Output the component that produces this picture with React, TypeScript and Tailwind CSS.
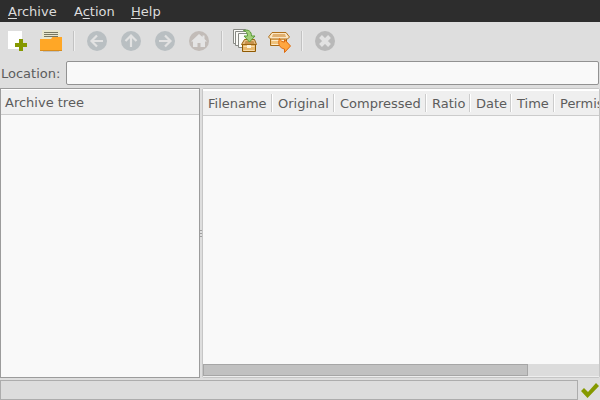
import type { ReactNode } from 'react'

const menus = [
  { before: '', key: 'A', after: 'rchive', width: 'w-[66px]' },
  { before: 'A', key: 'c', after: 'tion', width: 'w-[57px]' },
  { before: '', key: 'H', after: 'elp', width: 'w-[46px]' },
]

const columns = [
  { name: 'Filename', width: 'w-[70px]' },
  { name: 'Original', width: 'w-[62px]' },
  { name: 'Compressed', width: 'w-[92px]' },
  { name: 'Ratio', width: 'w-[44px]' },
  { name: 'Date', width: 'w-[41px]' },
  { name: 'Time', width: 'w-[43px]' },
  { name: 'Permissions', width: 'w-[92px]' },
]

export default function App() {
  return (
    <div className="flex h-screen flex-col overflow-hidden bg-[#dedede] font-['DejaVu_Sans',sans-serif] text-[13px] leading-4 text-[#5c5c5c]">
      {/* Menu bar */}
      <nav className="flex h-[22px] shrink-0 bg-[#2d2d2d] text-[#dcdcdc]">
        {menus.map(m => (
          <button key={m.key} type="button" className={`px-2 pt-0.5 text-left whitespace-nowrap ${m.width}`}>
            {m.before}
            <span className="underline underline-offset-2">{m.key}</span>
            {m.after}
          </button>
        ))}
      </nav>

      {/* Toolbar */}
      <div className="flex h-[38px] shrink-0 items-center" role="toolbar">
        <ToolButton label="New"><NewIcon /></ToolButton>
        <ToolButton label="Open"><OpenIcon /></ToolButton>
        <Separator />
        <ToolButton label="Back" disabled><RoundIcon d="M18 12H7M12 6.500L6.500 12l5.500 5.500" /></ToolButton>
        <ToolButton label="Up" disabled><RoundIcon d="M12 18V7M6.500 12L12 6.500l5.500 5.500" /></ToolButton>
        <ToolButton label="Forward" disabled><RoundIcon d="M6 12h11M12 6.500l5.500 5.500-5.500 5.500" /></ToolButton>
        <ToolButton label="Home" disabled><HomeIcon /></ToolButton>
        <Separator />
        <ToolButton label="Add"><AddIcon /></ToolButton>
        <ToolButton label="Extract"><ExtractIcon /></ToolButton>
        <Separator />
        <ToolButton label="Stop" disabled><StopIcon /></ToolButton>
      </div>

      {/* Location */}
      <div className="flex h-[26px] shrink-0 items-center gap-1.5 px-px">
        <label htmlFor="location" className="pt-0.5">Location:</label>
        <input
          id="location"
          type="text"
          className="h-6 min-w-0 flex-1 rounded-xs border border-[#929292] bg-[#f9f9f9] px-1 outline-none"
        />
      </div>

      {/* Tree and file list */}
      <main className="mt-0.5 flex min-h-0 flex-1">
        <section className="w-1/3 shrink-0 border border-[#9c9c9c] bg-[#f9f9f9]">
          <h2 className="h-[26px] border-t border-b border-t-white border-b-[#cccccc] bg-[#efefef] px-1 py-[5px]">Archive tree</h2>
        </section>

        <div className="flex w-0.5 shrink-0 flex-col items-center justify-center gap-0.5 bg-[#dedede]">
          <span className="h-px w-0.5 bg-[#a0a0a0]" />
          <span className="h-px w-0.5 bg-[#a0a0a0]" />
          <span className="h-px w-0.5 bg-[#a0a0a0]" />
        </div>

        <section className="flex min-w-0 flex-1 flex-col rounded-xs border border-[#c6c6c6] bg-[#f9f9f9]">
          <div className="min-h-0 flex-1 overflow-hidden border-t border-white">
            <table className="w-max table-fixed border-separate border-spacing-0 whitespace-nowrap">
              <thead>
                <tr>
                  {columns.map(c => (
                    <th key={c.name} className="h-[26px] border-t border-b border-t-white border-b-[#cccccc] bg-[#efefef] p-0 text-left font-normal">
                      <div className={`border-r border-white ${c.width}`}>
                        <div className="flex h-[18px] items-center border-r border-[#cccccc] pt-px pl-[5px]">{c.name}</div>
                      </div>
                    </th>
                  ))}
                </tr>
              </thead>
            </table>
          </div>
          <div className="h-3 shrink-0 bg-[#dcdcdc]">
            <div className="h-3 w-[82%] border border-[#a6a6a6] bg-[#c1c1c1]" />
          </div>
          <div className="h-px shrink-0 bg-[#eeeeee]" />
        </section>
      </main>

      {/* Status bar */}
      <footer className="mt-0.5 flex h-5 shrink-0 items-center">
        <div className="h-5 flex-1 border border-[#acacac] bg-[#dcdcdc]" />
        <svg className="ml-0.5 h-[18px] w-5" viewBox="0 0 20 18">
          <path d="M1 10l3-3 4 4 8-9 3 3L7.500 17z" fill="#859900" />
        </svg>
      </footer>
    </div>
  )
}

function ToolButton({ label, disabled, children }: { label: string; disabled?: boolean; children: ReactNode }) {
  return (
    <button type="button" aria-label={label} disabled={disabled} className="flex h-[34px] w-[34px] items-center justify-center">
      {children}
    </button>
  )
}

function Separator() {
  return (
    <div className="flex w-3 justify-center">
      <div className="h-5 w-0.5 border-l border-r border-l-[#c2c2c2] border-r-[#efefef]" />
    </div>
  )
}

function NewIcon() {
  return (
    <svg className="h-6 w-6" viewBox="0 0 24 24">
      <path d="M3 2h14v18H3z" fill="#ffffff" />
      <path d="M14 10h4v4h4v4h-4v4h-4v-4h-4v-4h4z" fill="#859900" />
    </svg>
  )
}

function OpenIcon() {
  return (
    <svg className="h-6 w-6" viewBox="0 0 24 24">
      <path d="M3 1h18v12H3z" fill="#e8e6cd" />
      <path d="M5 3.500h14M5 5.500h14M5 7.500h14" stroke="#77775f" />
      <path d="M1 10h11l1.500-2H23v13H1z" fill="#ffa726" />
      <path d="M1 21.500h22" stroke="#d88c1c" />
      <path d="M4 22.500h16" stroke="#c2c2c2" />
    </svg>
  )
}

function RoundIcon({ d }: { d: string }) {
  return (
    <svg className="h-6 w-6" viewBox="0 0 24 24">
      <circle cx="12" cy="12" r="10" fill="#b9bfc2" />
      <path d={d} fill="none" stroke="#e2e2e2" strokeWidth="2.200" />
    </svg>
  )
}

function HomeIcon() {
  return (
    <svg className="h-6 w-6" viewBox="0 0 24 24">
      <circle cx="12" cy="12" r="10" fill="#c2bcb8" />
      <path d="M12 5l3.500 3V6.500h2V10l2.500 2.500h-2V18h-4.500v-4h-3v4H6v-5.500H4z" fill="#e4e4e4" />
    </svg>
  )
}

function AddIcon() {
  return (
    <svg className="h-6 w-6" viewBox="0 0 24 24">
      <path d="M0.500 0.500h12v14h-12z" fill="#fbfbf8" stroke="#888a85" />
      <path d="M2.500 2.500h12v14h-12z" fill="#fbfbf8" stroke="#888a85" />
      <path d="M5.500 4.500h12v14h-12z" fill="#fbfbf8" stroke="#888a85" />
      <path d="M9.500 15.500h13v7h-13z" fill="#e9b96e" stroke="#8f5902" />
      <path d="M11.500 10.500h10l2 5h-15z" fill="#e9c084" stroke="#9a6410" />
      <path d="M12.500 12h8l1 3h-10z" fill="#c8924c" />
      <path d="M10.500 17.500h11M10.500 21.500h11" stroke="#f7dcae" />
      <path d="M14 16h4v3h-4z" fill="#fdf3dc" />
      <path d="M10.500 1.500c5-1.500 8 1 8 5.500h3.500l-5.500 6-5.500-6h3.500c0-3-1-4.500-4-5.500z" fill="#a2cf78" stroke="#5a9a38" />
    </svg>
  )
}

function ExtractIcon() {
  return (
    <svg className="h-6 w-6" viewBox="0 0 24 24">
      <path d="M3.500 8.500h16v8h-16z" fill="#efc27c" stroke="#a86a14" />
      <path d="M5 3.500h14l3.500 4.500-2 2H3.500l-2-2z" fill="#fbe6c2" stroke="#b0701a" />
      <path d="M6 5h12l1 3H5z" fill="#e0b070" />
      <path d="M4.500 11.500h14M4.500 15.500h14" stroke="#fdebcb" />
      <path d="M12.500 9.500c1.500 3 3 3.500 5 3.500v-2.500l6 6.500-6 6.500v-3.500c-5-1-7-5-5-10.500z" fill="#ffa640" stroke="#dc6a10" />
    </svg>
  )
}

function StopIcon() {
  return (
    <svg className="h-6 w-6" viewBox="0 0 24 24">
      <circle cx="12" cy="12" r="10" fill="#b9b9b9" />
      <path d="M7.500 7.500l9 9M16.500 7.500l-9 9" stroke="#e2e2e2" strokeWidth="4" />
    </svg>
  )
}
